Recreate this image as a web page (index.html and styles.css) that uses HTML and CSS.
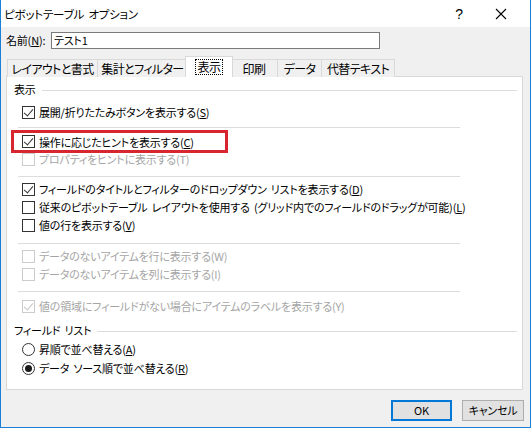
FILE: index.html
```html
<!DOCTYPE html>
<html lang="ja">
<head>
<meta charset="utf-8">
<title>ピボットテーブル オプション</title>
<link rel="stylesheet" href="styles.css">
</head>
<body>
<div class="window">
  <div class="titlebar">
    <span class="title">ピボットテーブル オプション</span>
    <span class="help">?</span>
    <span class="close"><svg width="12" height="12" viewBox="0 0 12 12"><path d="M1 1L11 11M11 1L1 11" stroke="#000" stroke-width="1.1" fill="none"/></svg></span>
  </div>
  <div class="client">
    <div class="name-row">
      <span class="name-label">名前(<u>N</u>):</span>
      <div class="input">テスト1</div>
    </div>
    <div class="tabs">
      <div class="tab t1">レイアウトと書式</div>
      <div class="tab t2">集計とフィルター</div>
      <div class="tab t3 selected"><span class="focus">表示</span></div>
      <div class="tab t4">印刷</div>
      <div class="tab t5">データ</div>
      <div class="tab t6">代替テキスト</div>
    </div>
    <div class="panel">
      <div class="group"><span class="group-label">表示</span><span class="group-line"></span></div>
      <div class="row r1"><span class="cb checked"></span><span>展開/折りたたみボタンを表示する(<u>S</u>)</span></div>
      <div class="sep s1"></div>
      <div class="row r2 highlight"><span class="cb checked"></span><span>操作に応じたヒントを表示する(<u>C</u>)</span><span class="redbox"></span></div>
      <div class="row r3 disabled"><span class="cb"></span><span>プロパティをヒントに表示する(T)</span></div>
      <div class="sep s2"></div>
      <div class="row r4"><span class="cb checked"></span><span>フィールドのタイトルとフィルターのドロップダウン リストを表示する(<u>D</u>)</span></div>
      <div class="row"><span class="cb"></span><span>従来のピボットテーブル レイアウトを使用する (グリッド内でのフィールドのドラッグが可能)(<u>L</u>)</span></div>
      <div class="row"><span class="cb"></span><span>値の行を表示する(<u>V</u>)</span></div>
      <div class="sep s3"></div>
      <div class="row r7 disabled"><span class="cb"></span><span>データのないアイテムを行に表示する(W)</span></div>
      <div class="row disabled"><span class="cb"></span><span>データのないアイテムを列に表示する(I)</span></div>
      <div class="sep s4"></div>
      <div class="row r9 disabled"><span class="cb checked"></span><span>値の領域にフィールドがない場合にアイテムのラベルを表示する(Y)</span></div>
      <div class="group g2"><span class="group-label">フィールド リスト</span><span class="group-line"></span></div>
      <div class="row rr1"><span class="radio"></span><span>昇順で並べ替える(<u>A</u>)</span></div>
      <div class="row rr2"><span class="radio on"></span><span>データ ソース順で並べ替える(<u>R</u>)</span></div>
    </div>
    <div class="buttons">
      <div class="btn default">OK</div>
      <div class="btn">キャンセル</div>
    </div>
  </div>
</div>
</body>
</html>
```

FILE: styles.css
```css
* { box-sizing: border-box; }
html, body { margin: 0; padding: 0; background: #fff; }
body {
  font-family: "Noto Sans CJK JP", "Noto Sans", sans-serif;
  font-size: 11px;
  letter-spacing: -0.2px;
  word-spacing: 2px;
  font-feature-settings: "palt";
  color: #000;
}
u { text-decoration: underline; text-underline-offset: 1px; }

.window {
  width: 531px;
  height: 428px;
  border-left: 1px solid #1c7fd6;
  border-right: 1px solid #1c7fd6;
  border-bottom: 1px solid #1c7fd6;
  display: flex;
  flex-direction: column;
}

.titlebar {
  height: 27px;
  background: #fff;
  display: flex;
  align-items: center;
  padding-left: 3px;
}
.title { flex: 1; font-size: 11.5px; }
.help { width: 14px; text-align: center; font-family: "Liberation Sans", sans-serif; font-size: 14px; margin-right: 28px; }
.close { width: 14px; display: flex; align-items: center; justify-content: center; margin-right: 22px; }

.client {
  flex: 1;
  background: #f0f0f0;
  display: flex;
  flex-direction: column;
}

.name-row {
  display: flex;
  align-items: center;
  height: 18px;
  margin-top: 4px;
  padding-left: 5px;
}
.name-label { width: 45px; flex: none; }
.input {
  width: 329px;
  height: 17px;
  background: #fff;
  border: 1px solid #7a7a7a;
  line-height: 15px;
  padding-left: 2px;
}

.tabs {
  display: flex;
  align-items: flex-end;
  margin-top: 8px;
  padding-left: 6px;
  height: 20px;
  position: relative;
  z-index: 1;
}
.tab {
  height: 18px;
  line-height: 17px;
  border: 1px solid #d9d9d9;
  border-bottom: none;
  border-right: none;
  background: #f0f0f0;
  text-align: center;
  white-space: nowrap;
  font-size: 12px;
  letter-spacing: -0.6px;
}
.t1 { width: 90px; }
.t2 { width: 90px; }
.t4 { width: 46px; }
.t5 { width: 44px; }
.t6 { width: 74px; border-right: 1px solid #d9d9d9; }
.tab.selected {
  width: 48px;
  height: 21px;
  margin: 0 -2px 0 -2px;
  background: #fff;
  border-right: 1px solid #d9d9d9;
  position: relative;
  padding-top: 1px;
}
.tab.selected + .tab { border-left: none; }
.focus {
  display: inline-block;
  border: 1px dotted #000;
  line-height: 14px;
  height: 16px;
  padding: 0 2px;
}

.panel {
  margin: -1px 7px 0 5px;
  height: 314px;
  background: #fff;
  border: 1px solid #d9d9d9;
  display: flex;
  flex-direction: column;
  padding-top: 3px;
}

.group {
  display: flex;
  align-items: center;
  height: 18px;
  padding-left: 7px;
}
.group-label { margin-right: 6px; }
.group-line { flex: 1; height: 1px; background: #dcdcdc; margin-right: 5px; margin-top: 2px; }
.g2 { margin-top: 6px; }

.row {
  display: flex;
  align-items: center;
  height: 18px;
  padding-left: 15px;
  white-space: nowrap;
  position: relative;
}
.row.disabled { color: #a5a5a5; }
.r1 { margin-top: 5px; }
.r2 { margin-top: 5px; height: 17px; }
.r4 { margin-top: 3px; }
.r7 { margin-top: 3px; }
.r9 { margin-top: 5px; }
.rr1 { margin-top: 1px; }
.rr2 { margin-top: 1px; }

.sep { height: 1px; background: #dcdcdc; margin-left: 11px; width: 442px; }
.s1 { margin-top: 6px; }
.s2 { margin-top: 8px; }
.s3 { margin-top: 9px; }
.s4 { margin-top: 8px; }

.cb {
  width: 13px;
  height: 13px;
  border: 1px solid #333;
  background: #fff;
  margin-right: 4px;
  flex: none;
  position: relative;
}
.disabled .cb { border-color: #cccccc; }
.cb.checked::after {
  content: "";
  position: absolute;
  left: 3px;
  top: 0px;
  width: 4px;
  height: 8px;
  border-right: 1.5px solid #333;
  border-bottom: 1.5px solid #333;
  transform: rotate(40deg);
}
.disabled .cb.checked::after { border-color: #c4c4c4; }

.radio {
  width: 13px;
  height: 13px;
  border: 1px solid #333;
  border-radius: 50%;
  background: #fff;
  margin-right: 4px;
  flex: none;
  display: flex;
  align-items: center;
  justify-content: center;
}
.radio.on::after {
  content: "";
  width: 7px;
  height: 7px;
  border-radius: 50%;
  background: #1a1a1a;
}

.redbox {
  position: absolute;
  left: 4px;
  top: -3px;
  width: 217px;
  height: 23px;
  border: 3px solid #d7262f;
}

.buttons {
  display: flex;
  justify-content: flex-end;
  gap: 10px;
  margin-top: 10px;
  padding-right: 6px;
}
.btn {
  width: 62px;
  height: 21px;
  line-height: 19px;
  text-align: center;
  background: #e1e1e1;
  border: 1px solid #adadad;
}
.btn.default { width: 61px; border: 2px solid #0078d7; line-height: 17px; }
```
